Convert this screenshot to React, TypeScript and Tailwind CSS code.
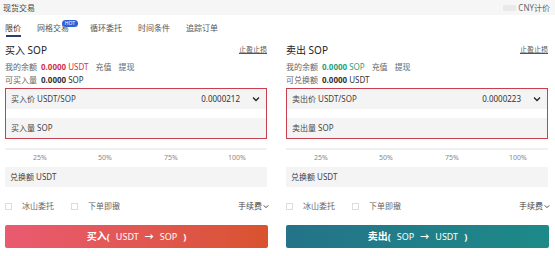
import React from "react";

function Chevron({ className = "" }: { className?: string }) {
  return (
    <svg className={className} width="8" height="6" viewBox="0 0 8 6" fill="none">
      <path d="M1 1.5 L4 4.5 L7 1.5" stroke="currentColor" strokeWidth="1.3" />
    </svg>
  );
}

function Panel({ side }: { side: "buy" | "sell" }) {
  const buy = side === "buy";
  return (
    <div className="flex w-[264px] flex-col">
      <div className="flex h-[20px] items-center justify-between">
        <span className="text-[10px] text-[#222]">{buy ? "买入 SOP" : "卖出 SOP"}</span>
        <span className="mr-[2px] text-[7px] text-[#555] underline">止盈止损</span>
      </div>
      <div className="mt-[1px] flex h-[12px] items-center gap-[4px] text-[8px] text-[#666]">
        <span>我的余额</span>
        <span className={buy ? "font-bold text-[#d0334a]" : "font-bold text-[#2aa27a]"}>0.0000</span>
        <span className={buy ? "-ml-[2px] text-[#d0334a]" : "-ml-[2px] text-[#2aa27a]"}>{buy ? "USDT" : "SOP"}</span>
        <span className="ml-[3px]">充值</span>
        <span className="ml-[3px]">提现</span>
      </div>
      <div className="mt-[1px] flex h-[12px] items-center gap-[4px] text-[8px] text-[#666]">
        <span>{buy ? "可买入量" : "可兑换额"}</span>
        <span className="font-bold text-[#333]">0.0000</span>
        <span className="-ml-[2px] text-[#333]">{buy ? "SOP" : "USDT"}</span>
      </div>
      <div className="mt-[2px] flex w-[262px] flex-col border-[1.5px] border-[#c8404f]">
        <div className="flex h-[20px] items-center justify-between bg-[#f4f4f4] pl-[5px] pr-[6px] text-[8px] text-[#444]">
          <span>{buy ? "买入价 USDT/SOP" : "卖出价 USDT/SOP"}</span>
          <div className="flex items-center gap-[12px]">
            <span className="text-[#333]">{buy ? "0.0000212" : "0.0000223"}</span>
            <Chevron className="text-[#222]" />
          </div>
        </div>
        <div className="h-[9px] bg-white" />
        <div className="flex h-[20px] items-center bg-[#f4f4f4] pl-[5px] text-[8px] text-[#444]">
          <span>{buy ? "买入量 SOP" : "卖出量 SOP"}</span>
        </div>
      </div>
      <div className="mt-[9px] h-[2px] w-[262px] bg-[#f0f0f0]" />
      <div className="relative h-[14px] w-[262px] text-[7px] text-[#888]">
        <span className="absolute left-[28px] top-[3px]">25%</span>
        <span className="absolute left-[93px] top-[3px]">50%</span>
        <span className="absolute left-[159px] top-[3px]">75%</span>
        <span className="absolute left-[223px] top-[3px]">100%</span>
      </div>
      <div className="mt-[3px] flex h-[20px] w-[262px] items-center bg-[#f4f4f4] pl-[5px] text-[8px] text-[#444]">
        兑换额 USDT
      </div>
      <div className="mt-[11px] flex h-[16px] items-center justify-between text-[8px] text-[#666]">
        <div className="flex items-center">
          <span className="h-[7px] w-[7px] border border-[#ddd]" />
          <span className="ml-[10px]">冰山委托</span>
          <span className="ml-[17px] h-[7px] w-[7px] border border-[#ddd]" />
          <span className="ml-[10px]">下单即撤</span>
        </div>
        <div className="flex items-center gap-[1px] text-[#444]">
          <span>手续费</span>
          <Chevron className="h-[5px] w-[6px] text-[#444]" />
        </div>
      </div>
      <div
        className={
          "mt-[11px] flex h-[23px] w-[263px] items-center justify-center rounded-[2px] text-[9px] text-white " +
          (buy
            ? "bg-gradient-to-r from-[#ea5a70] to-[#d9532e]"
            : "bg-gradient-to-r from-[#247388] to-[#1c8a88]")
        }
      >
        <span className="text-[10px] font-bold">{buy ? "买入" : "卖出"}</span>
        <span className="font-bold">(</span>
        <span className="ml-[6px]">{buy ? "USDT" : "SOP"}</span>
        <span className="mx-[6px] font-bold">→</span>
        <span>{buy ? "SOP" : "USDT"}</span>
        <span className="ml-[6px] font-bold">)</span>
      </div>
    </div>
  );
}

export default function App() {
  return (
    <div
      className="h-[256px] w-[555px] overflow-hidden bg-white"
      style={{ fontFamily: '"Noto Sans", "Noto Sans CJK SC", sans-serif' }}
    >
      <div className="flex h-[15px] items-center justify-between bg-[#f6f6f6] pl-[3px] pr-[5px]">
        <span className="text-[8px] text-[#444]">现货交易</span>
        <div className="flex items-center gap-[2px]">
          <span className="h-[6px] w-[13px] rounded-[1px] bg-[#e9e9e9]" />
          <span className="text-[8px] text-[#666]">CNY计价</span>
        </div>
      </div>
      <div className="flex h-[24px] items-end pl-[5px] text-[8px] text-[#555]">
        <div className="flex flex-col items-center">
          <span className="leading-[12px] text-[#333]">限价</span>
          <span className="mb-[2px] mt-[1px] h-[2px] w-[15px] bg-[#2a3d6b]" />
        </div>
        <div className="relative ml-[16px] flex flex-col">
          <span className="leading-[12px]">网格交易</span>
          <span className="h-[5px]" />
          <span className="absolute -right-[9px] -top-[2px] rounded-full bg-[#2e63d6] px-[3px] text-[5px] leading-[7px] text-white">
            HOT
          </span>
        </div>
        <div className="ml-[21px] flex flex-col">
          <span className="leading-[12px]">循环委托</span>
          <span className="h-[5px]" />
        </div>
        <div className="ml-[16px] flex flex-col">
          <span className="leading-[12px]">时间条件</span>
          <span className="h-[5px]" />
        </div>
        <div className="ml-[16px] flex flex-col">
          <span className="leading-[12px]">追踪订单</span>
          <span className="h-[5px]" />
        </div>
      </div>
      <div className="flex gap-[17px] pl-[5px] pt-[1px]">
        <Panel side="buy" />
        <Panel side="sell" />
      </div>
    </div>
  );
}
